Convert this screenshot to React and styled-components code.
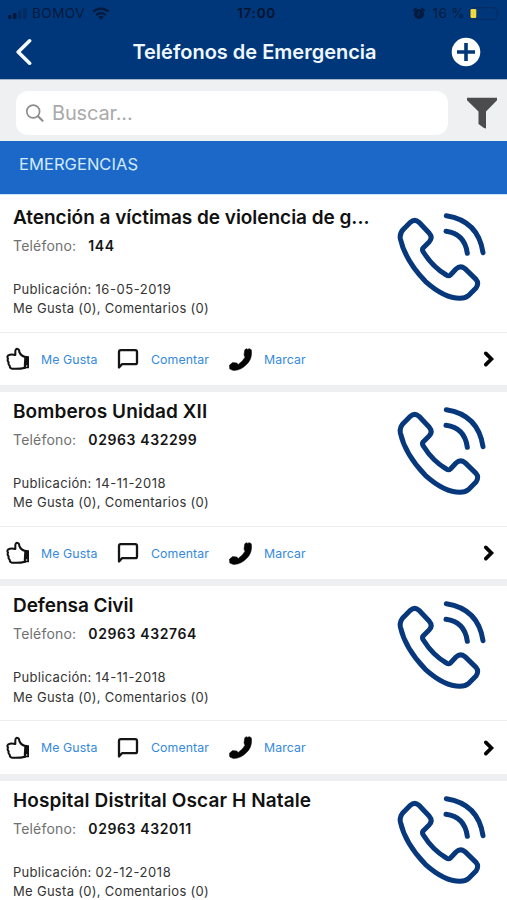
import styled, { createGlobalStyle } from "styled-components"

const GlobalStyle = createGlobalStyle`
    * {
        box-sizing: border-box;
    }
    body {
        margin: 0;
        background: #ffffff;
        font-family: Inter, "Liberation Sans", sans-serif;
    }
    svg {
        display: block;
        flex-shrink: 0;
    }
`

const Screen = styled.div`
    width: 507px;
    height: 900px;
    overflow: hidden;
    background: #ffffff;
`

const Header = styled.header`
    height: 79px;
    background: #00377a;
`

const StatusBar = styled.div`
    height: 27px;
    display: grid;
    grid-template-columns: 1fr auto 1fr;
    align-items: center;
    padding: 0 7px 0 7px;
    color: #051a3c;
    font-size: 13.5px;
    line-height: 27px;
`

const StatusSide = styled.div`
    display: flex;
    align-items: center;
    justify-content: ${props => props.$end ? "flex-end" : "flex-start"};
`

const Carrier = styled.span`
    margin: 0 7px 0 5px;
    letter-spacing: 0.5px;
`

const Clock = styled.span`
    padding-left: 6px;
    font-weight: 600;
    letter-spacing: 0.8px;
    color: #04142e;
`

const Percent = styled.span`
    margin: 0 4px 0 7px;
    letter-spacing: 0.4px;
`

const NavBar = styled.div`
    height: 50px;
    display: grid;
    grid-template-columns: 60px 1fr 60px;
    align-items: center;
`

const NavTitle = styled.h1`
    margin: 0;
    padding-left: 2px;
    text-align: center;
    font-size: 20px;
    font-weight: 600;
    letter-spacing: 0;
    color: #f0f8ff;
    white-space: nowrap;
`

const NavButton = styled.button`
    border: none;
    background: transparent;
    padding: 0;
    margin-left: ${props => props.$left};
`

const SearchBar = styled.div`
    height: 62px;
    display: flex;
    align-items: center;
    padding: 5px 9px 0 16px;
    background: #eff0f2;
    border-top: 1px solid #a5b7cc;
`

const SearchBox = styled.div`
    width: 432px;
    height: 44px;
    display: flex;
    align-items: center;
    margin-right: 18px;
    padding-left: 9px;
    border-radius: 12px;
    background: #ffffff;
    color: #aaaaaa;
    font-size: 20px;
    letter-spacing: -0.15px;
`

const SearchHint = styled.span`
    margin-left: 8px;
`

const SectionTitle = styled.h2`
    height: 53px;
    margin: 0;
    padding: 0 19px;
    background: #1b68c8;
    color: #d3eaff;
    font-size: 16.5px;
    font-weight: 400;
    line-height: 46px;
    letter-spacing: 0.05px;
`

const List = styled.main`
    padding-top: 2.5px;
    border-top: 1px solid #c8e2fb;
`

const Card = styled.article`
    height: 194.4px;
    border-bottom: 7px solid #eeeff1;
`

const CardBody = styled.div`
    height: 134px;
    display: flex;
    justify-content: space-between;
    padding: 7px 18px 0 13px;
`

const CardInfo = styled.div`
    width: 370px;
    white-space: nowrap;
`

const Name = styled.h3`
    margin: 0;
    font-size: 19px;
    font-weight: 600;
    line-height: 26px;
    letter-spacing: ${props => props.$spacing};
    color: #111111;
`

const Phone = styled.div`
    display: flex;
    margin-top: 3px;
    font-size: 14px;
    line-height: 24px;
    letter-spacing: 0.2px;
    color: #707070;
    b {
        margin-left: 12px;
        font-weight: 600;
        letter-spacing: 0.6px;
        color: #151515;
    }
`

const Meta = styled.div`
    margin-top: 22px;
    font-size: 13px;
    line-height: 19.6px;
    letter-spacing: 0.3px;
    color: #343434;
`

const PublishDate = styled.span`
    letter-spacing: 0.55px;
`

const CallPicture = styled.div`
    margin-top: 5px;
`

const Actions = styled.div`
    height: 53px;
    display: flex;
    align-items: center;
    padding: 1px 12px 0 6px;
    border-top: 1px solid #eeeeef;
`

const Action = styled.button`
    width: ${props => props.$width};
    display: flex;
    align-items: center;
    padding: 0;
    border: none;
    background: transparent;
    font-family: inherit;
    font-size: 12.3px;
    letter-spacing: 0.1px;
    color: #3489dc;
    span {
        margin-left: ${props => props.$gap || "12px"};
    }
`

const Arrow = styled.div`
    margin-left: auto;
`

const Signal = () => (
    <svg width="20" height="12" viewBox="0 0 20 12">
        <rect x="1" y="7" width="3.5" height="4" rx="1" fill="#051a3c" />
        <rect x="6" y="5" width="3.5" height="6" rx="1" fill="#051a3c" />
        <rect x="11" y="2.5" width="3.5" height="8.5" rx="1" fill="#042b61" />
        <rect x="16" y="0" width="3.5" height="11" rx="1" fill="#042b61" />
    </svg>
)

const Wifi = () => (
    <svg width="18" height="13" viewBox="0 0 18 13" fill="none" stroke="#051a3c" strokeWidth="2.4">
        <path d="M1.2 4.7Q9 -1.8 16.8 4.7" />
        <path d="M4.2 8Q9 4 13.8 8" />
        <path d="M6.2 9.8Q9 7.8 11.8 9.8L9 12.7Z" fill="#051a3c" stroke="none" />
    </svg>
)

const Alarm = () => (
    <svg width="12" height="13" viewBox="0 0 12 13">
        <circle cx="6" cy="7" r="5" fill="#051a3c" />
        <path d="M.8 3.3L3 1.3M11.2 3.3L9 1.3" stroke="#051a3c" strokeWidth="1.7" strokeLinecap="round" />
        <path d="M6 4.3V7.2L4.4 8.5" fill="none" stroke="#00377a" strokeWidth=".9" />
    </svg>
)

const Battery = () => (
    <svg width="31" height="13" viewBox="0 0 31 13">
        <rect x=".7" y=".7" width="27" height="11.6" rx="3" fill="none" stroke="#052a60" />
        <rect x="1.5" y="2" width="5.8" height="9" rx="1.3" fill="#f2d83d" />
        <path d="M29 4.3Q31 6.5 29 8.7Z" fill="#052a60" />
    </svg>
)

const Back = () => (
    <svg width="17" height="28" viewBox="0 0 17 28">
        <path d="M14.6 2.8L3.2 14L14.6 25.2" fill="none" stroke="#f5faff" strokeWidth="3.6" strokeLinecap="round" strokeLinejoin="round" />
    </svg>
)

const Add = () => (
    <svg width="30" height="30" viewBox="0 0 30 30">
        <circle cx="15" cy="15" r="14.3" fill="#ffffff" />
        <path d="M15 6V24M6 15H24" stroke="#00377a" strokeWidth="3.6" />
    </svg>
)

const Magnifier = () => (
    <svg width="19" height="19" viewBox="0 0 19 19" fill="none" stroke="#8d8d8d" strokeWidth="1.7" strokeLinecap="round">
        <circle cx="8.2" cy="7.5" r="6.4" />
        <path d="M12.8 12.1L17.5 16.8" strokeWidth="2.1" />
    </svg>
)

const Funnel = () => (
    <svg width="32" height="32" viewBox="0 0 32 32">
        <path d="M1 .8H31V3.3L20 14.5V31.5L18 31L12.5 27V14.5L1 3.3Z" fill="#4c4c4e" />
    </svg>
)

const Calling = () => (
    <svg width="94" height="91" viewBox="495 45 282 273" fill="none" stroke="#06387b" strokeWidth="15" strokeLinecap="round" strokeLinejoin="round">
        <path d="M541 82Q554 70 567 82L598 115Q609 128 598 140L580 158Q575 164 580 171Q608 216 649 240Q656 245 662 239L678 222Q691 210 705 221L738 253Q748 265 738 279L715 302Q706 310 690 310Q643 310 586 259Q525 195 511 131Q508 114 522 101Z" />
        <path d="M648 109Q704 116 712 175" />
        <path d="M649 62Q745 77 759 173" />
    </svg>
)

const Thumb = () => (
    <svg width="24" height="24" viewBox="6 9 72 72">
        <path d="M34 33V21Q35 13 41 15Q46 16 46 24Q51 36 62 38L68 39L64 71Q45 76 23 74Q17 72 17 65Q12 61 14 55Q9 50 12 44Q8 38 13 34Q21 29 34 33Z" fill="#ffffff" stroke="#111111" strokeWidth="6" strokeLinejoin="round" />
        <path d="M61 37H75V73H59Z" fill="#111111" />
        <circle cx="68" cy="66" r="2.2" fill="#ffffff" />
    </svg>
)

const Bubble = () => (
    <svg width="22" height="22" viewBox="0 0 22 22">
        <path d="M2 19.5V4Q2 2.2 3.8 2.2H18.2Q20 2.2 20 4V14.4Q20 16.2 18.2 16.2H5Z" fill="none" stroke="#151515" strokeWidth="2.3" strokeLinejoin="round" />
    </svg>
)

const Handset = () => (
    <svg width="23" height="23" viewBox="0 0 23 23">
        <path d="M15.7 2.1L17 .7L19 1.4L20 .6L22.3 1.8Q23.6 10.4 18 16.1Q12.4 22.2 4.5 22.6L.8 21L.4 17.2L3.6 14.6L7.7 15L9.2 16.4Q13.7 13.6 16 9.2L15 7Z" fill="#050505" stroke="#050505" strokeWidth=".5" strokeLinejoin="round" />
    </svg>
)

const Chevron = () => (
    <svg width="13" height="18" viewBox="0 0 13 18">
        <path d="M3.8 3.4L9.4 9L3.8 14.6" fill="none" stroke="#050505" strokeWidth="3.7" strokeLinecap="round" />
    </svg>
)

const contacts = [
    { name: "Atención a víctimas de violencia de g...", phone: "144", date: "16-05-2019", spacing: "-0.03px", actions: true },
    { name: "Bomberos Unidad XII", phone: "02963 432299", date: "14-11-2018", spacing: "0.1px", actions: true },
    { name: "Defensa Civil", phone: "02963 432764", date: "14-11-2018", spacing: "-0.05px", actions: true },
    { name: "Hospital Distrital Oscar H Natale", phone: "02963 432011", date: "02-12-2018", spacing: "0.12px", actions: false },
]

function ContactCard({ contact }) {
    return (
        <Card>
            <CardBody>
                <CardInfo>
                    <Name $spacing={contact.spacing}>{contact.name}</Name>
                    <Phone>Teléfono: <b>{contact.phone}</b></Phone>
                    <Meta>
                        <div>Publicación: <PublishDate>{contact.date}</PublishDate></div>
                        <div>Me Gusta (0), Comentarios (0)</div>
                    </Meta>
                </CardInfo>
                <CallPicture><Calling /></CallPicture>
            </CardBody>
            {contact.actions &&
                <Actions>
                    <Action $width="111px" $gap="11px"><Thumb /><span>Me Gusta</span></Action>
                    <Action $width="112px"><Bubble /><span>Comentar</span></Action>
                    <Action $width="90px"><Handset /><span>Marcar</span></Action>
                    <Arrow><Chevron /></Arrow>
                </Actions>
            }
        </Card>
    )
}

export default function App() {
    return (
        <Screen>
            <GlobalStyle />
            <Header>
                <StatusBar>
                    <StatusSide>
                        <Signal />
                        <Carrier>BOMOV</Carrier>
                        <Wifi />
                    </StatusSide>
                    <Clock>17:00</Clock>
                    <StatusSide $end>
                        <Alarm />
                        <Percent>16 %</Percent>
                        <Battery />
                    </StatusSide>
                </StatusBar>
                <NavBar>
                    <NavButton $left="15px" aria-label="Volver"><Back /></NavButton>
                    <NavTitle>Teléfonos de Emergencia</NavTitle>
                    <NavButton $left="4px" aria-label="Agregar"><Add /></NavButton>
                </NavBar>
            </Header>
            <SearchBar>
                <SearchBox>
                    <Magnifier />
                    <SearchHint>Buscar...</SearchHint>
                </SearchBox>
                <Funnel />
            </SearchBar>
            <SectionTitle>EMERGENCIAS</SectionTitle>
            <List>
                {contacts.map((contact, index) =>
                    <ContactCard key={index} contact={contact} />
                )}
            </List>
        </Screen>
    )
}
